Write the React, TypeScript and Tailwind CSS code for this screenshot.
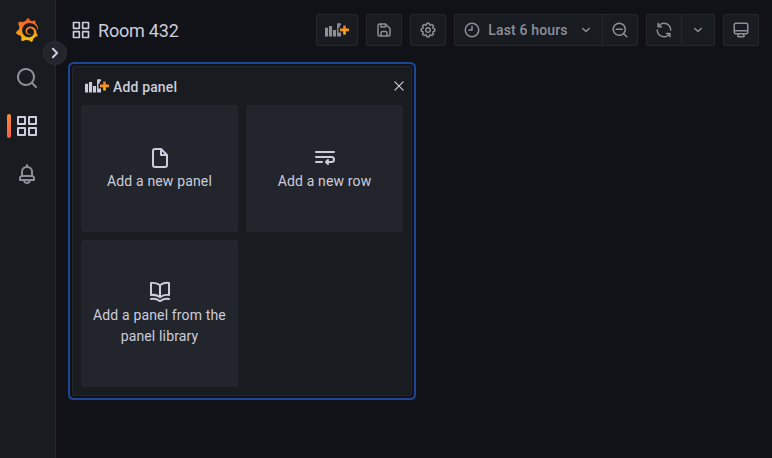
import React from 'react';
import { SiGrafana } from 'react-icons/si';

const paths = {
  apps: 'M10,13H3a1,1,0,0,0-1,1v7a1,1,0,0,0,1,1h7a1,1,0,0,0,1-1V14A1,1,0,0,0,10,13ZM9,20H4V15H9ZM21,2H14a1,1,0,0,0-1,1v7a1,1,0,0,0,1,1h7a1,1,0,0,0,1-1V3A1,1,0,0,0,21,2ZM20,9H15V4h5Zm1,4H14a1,1,0,0,0-1,1v7a1,1,0,0,0,1,1h7a1,1,0,0,0,1-1V14A1,1,0,0,0,21,13Zm-1,7H15V15h5ZM10,2H3A1,1,0,0,0,2,3v7a1,1,0,0,0,1,1h7a1,1,0,0,0,1-1V3A1,1,0,0,0,10,2ZM9,9H4V4H9Z',
  search: 'M21.71,20.29,18,16.61A9,9,0,1,0,16.61,18l3.68,3.68a1,1,0,0,0,1.42,0A1,1,0,0,0,21.71,20.29ZM11,18a7,7,0,1,1,7-7A7,7,0,0,1,11,18Z',
  zoomOut: 'M21.71,20.29,18,16.61A9,9,0,1,0,16.61,18l3.68,3.68a1,1,0,0,0,1.42,0A1,1,0,0,0,21.71,20.29ZM11,18a7,7,0,1,1,7-7A7,7,0,0,1,11,18Zm4-8H7a1,1,0,0,0,0,2h8a1,1,0,0,0,0-2Z',
  bell: 'M18,13.18V10a6,6,0,0,0-5-5.91V3a1,1,0,0,0-2,0V4.09A6,6,0,0,0,6,10v3.18A3,3,0,0,0,4,16v2a1,1,0,0,0,1,1H8.14a4,4,0,0,0,7.72,0H19a1,1,0,0,0,1-1V16A3,3,0,0,0,18,13.18ZM8,10a4,4,0,0,1,8,0v3H8Zm4,10a2,2,0,0,1-1.72-1h3.44A2,2,0,0,1,12,20Zm6-3H6V16a1,1,0,0,1,1-1H17a1,1,0,0,1,1,1Z',
  save: 'M20.71,9.29l-6-6a1,1,0,0,0-.32-.21A1.09,1.09,0,0,0,14,3H6A3,3,0,0,0,3,6V18a3,3,0,0,0,3,3H18a3,3,0,0,0,3-3V10A1,1,0,0,0,20.71,9.29ZM9,5h4V7H9Zm6,14H9V16a1,1,0,0,1,1-1h4a1,1,0,0,1,1,1Zm4-1a1,1,0,0,1-1,1H17V16a3,3,0,0,0-3-3H10a3,3,0,0,0-3,3v3H6a1,1,0,0,1-1-1V6A1,1,0,0,1,6,5H7V8A1,1,0,0,0,8,9h6a1,1,0,0,0,1-1V6.41l4,4Z',
  cog: 'M21.32,9.55l-1.89-.63.89-1.78A1,1,0,0,0,20.13,6L18,3.87a1,1,0,0,0-1.15-.19l-1.78.89-.63-1.89A1,1,0,0,0,13.5,2h-3a1,1,0,0,0-.95.68L8.92,4.57,7.14,3.68A1,1,0,0,0,6,3.87L3.87,6a1,1,0,0,0-.19,1.15l.89,1.78-1.89.63A1,1,0,0,0,2,10.5v3a1,1,0,0,0,.68.95l1.89.63-.89,1.78A1,1,0,0,0,3.87,18L6,20.13a1,1,0,0,0,1.15.19l1.78-.89.63,1.89a1,1,0,0,0,.95.68h3a1,1,0,0,0,.95-.68l.63-1.89,1.78.89A1,1,0,0,0,18,20.13L20.13,18a1,1,0,0,0,.19-1.15l-.89-1.78,1.89-.63A1,1,0,0,0,22,13.5v-3A1,1,0,0,0,21.32,9.55ZM20,12.78l-1.2.4A2,2,0,0,0,17.64,16l.57,1.14-1.1,1.1L16,17.64a2,2,0,0,0-2.79,1.16l-.4,1.2H11.22l-.4-1.2A2,2,0,0,0,8,17.64l-1.14.57-1.1-1.1L6.36,16A2,2,0,0,0,5.2,13.18L4,12.78V11.22l1.2-.4A2,2,0,0,0,6.36,8L5.79,6.89l1.1-1.1L8,6.36A2,2,0,0,0,10.82,5.2l.4-1.2h1.56l.4,1.2A2,2,0,0,0,16,6.36l1.14-.57,1.1,1.1L17.64,8a2,2,0,0,0,1.16,2.79l1.2.4ZM12,8a4,4,0,1,0,4,4A4,4,0,0,0,12,8Zm0,6a2,2,0,1,1,2-2A2,2,0,0,1,12,14Z',
  clock: 'M12,2A10,10,0,1,0,22,12,10,10,0,0,0,12,2Zm0,18a8,8,0,1,1,8-8A8,8,0,0,1,12,20ZM12,6a1,1,0,0,0-1,1v4H8a1,1,0,0,0,0,2h4a1,1,0,0,0,1-1V7A1,1,0,0,0,12,6Z',
  sync: 'M19.91,15.51H15.38a1,1,0,0,0,0,2h2.4A8,8,0,0,1,4,12a1,1,0,1,0-2,0,10,10,0,0,0,16.88,7.23V21a1,1,0,0,0,2,0V16.5A1,1,0,0,0,19.91,15.51ZM12,2A10,10,0,0,0,5.12,4.77V3a1,1,0,0,0-2,0V7.5a1,1,0,0,0,1,1h4.5a1,1,0,0,0,0-2H6.22A8,8,0,0,1,20,12a1,1,0,0,0,2,0A10,10,0,0,0,12,2Z',
  down: 'M17,9.17a1,1,0,0,0-1.41,0L12,12.71,8.46,9.17a1,1,0,0,0-1.41,0,1,1,0,0,0,0,1.42l4.24,4.24a1,1,0,0,0,1.42,0L17,10.59A1,1,0,0,0,17,9.17Z',
  right: 'M14.83,11.29,10.59,7.05a1,1,0,0,0-1.42,0,1,1,0,0,0,0,1.41L12.71,12,9.17,15.54a1,1,0,0,0,0,1.41,1,1,0,0,0,.71.29,1,1,0,0,0,.71-.29l4.24-4.24A1,1,0,0,0,14.83,11.29Z',
  monitor: 'M19,2H5A3,3,0,0,0,2,5V15a3,3,0,0,0,3,3H7.64l-.58,1a2,2,0,0,0,0,2,2,2,0,0,0,1.75,1h6.46A2,2,0,0,0,17,21a2,2,0,0,0,0-2l-.59-1H19a3,3,0,0,0,3-3V5A3,3,0,0,0,19,2ZM8.77,20,10,18H14l1.2,2ZM20,15a1,1,0,0,1-1,1H5a1,1,0,0,1-1-1V14H20Zm0-3H4V5A1,1,0,0,1,5,4H19a1,1,0,0,1,1,1Z',
  times: 'M13.41,12l6.3-6.29a1,1,0,1,0-1.42-1.42L12,10.59,5.71,4.29A1,1,0,0,0,4.29,5.71L10.59,12l-6.3,6.29a1,1,0,0,0,0,1.42,1,1,0,0,0,1.42,0L12,13.41l6.29,6.3a1,1,0,0,0,1.42,0,1,1,0,0,0,0-1.42Z',
  file: 'M20,8.94a1.31,1.31,0,0,0-.06-.27l0-.09a1.07,1.07,0,0,0-.19-.28h0l-6-6h0a1.07,1.07,0,0,0-.28-.19l-.09,0L13.06,2H7A3,3,0,0,0,4,5V19a3,3,0,0,0,3,3H17a3,3,0,0,0,3-3V9S20,9,20,8.94ZM14,5.41,16.59,8H14ZM18,19a1,1,0,0,1-1,1H7a1,1,0,0,1-1-1V5A1,1,0,0,1,7,4h5V9a1,1,0,0,0,1,1h5Z',
  wrap: 'M3,7H21a1,1,0,0,0,0-2H3A1,1,0,0,0,3,7ZM9,15H3a1,1,0,0,0,0,2H9a1,1,0,0,0,0-2Zm9.5-5H3a1,1,0,0,0,0,2H18.5a1.5,1.5,0,0,1,0,3H15.41l.3-.29a1,1,0,0,0-1.42-1.42l-2,2a1,1,0,0,0-.21.33,1,1,0,0,0,0,.76,1,1,0,0,0,.21.33l2,2a1,1,0,0,0,1.42,0,1,1,0,0,0,0-1.42l-.3-.29H18.5a3.5,3.5,0,0,0,0-7Z',
  book: 'M21.17,2.06A13.1,13.1,0,0,0,19,1.87a12.94,12.94,0,0,0-7,2.05,12.94,12.94,0,0,0-7-2,13.1,13.1,0,0,0-2.17.19,1,1,0,0,0-.83,1v12a1,1,0,0,0,1.17,1,10.9,10.9,0,0,1,8.25,1.91l.12.07.11,0a.91.91,0,0,0,.7,0l.11,0,.12-.07A10.9,10.9,0,0,1,20.83,16,1,1,0,0,0,22,15V3A1,1,0,0,0,21.17,2.06ZM11,15.35a12.87,12.87,0,0,0-6-1.48c-.33,0-.66,0-1,0v-10a8.69,8.69,0,0,1,1,0,10.86,10.86,0,0,1,6,1.8Zm9-1.44c-.34,0-.67,0-1,0a12.87,12.87,0,0,0-6,1.48V5.67a10.86,10.86,0,0,1,6-1.8,8.69,8.69,0,0,1,1,0Zm1.17,4.15A13.1,13.1,0,0,0,19,17.87a12.94,12.94,0,0,0-7,2.05,12.94,12.94,0,0,0-7-2.05,13.1,13.1,0,0,0-2.17.19A1,1,0,0,0,2,19.21a1,1,0,0,0,1.17.79,10.9,10.9,0,0,1,8.25,1.91,1,1,0,0,0,1.16,0A10.9,10.9,0,0,1,20.83,20,1,1,0,0,0,22,19.21,1,1,0,0,0,21.17,18.06Z',
};

function Icon({ name, size = 18 }: { name: keyof typeof paths; size?: number }) {
  return (
    <svg width={size} height={size} viewBox="0 0 24 24" fill="currentColor" className="shrink-0">
      <path d={paths[name]} />
    </svg>
  );
}

function AddPanelIcon() {
  return (
    <svg width="24" height="14" viewBox="0 0 24 14" className="shrink-0">
      <defs>
        <linearGradient id="plus" x1="0" y1="0" x2="0" y2="1">
          <stop offset="0" stopColor="#f2682c" />
          <stop offset="1" stopColor="#fcc419" />
        </linearGradient>
      </defs>
      <path
        fill="currentColor"
        d="M0 4.8h3.1v8.8H0zM4 3.1h3.1v10.5H4zM8 6.9h3.1v6.7H8zM12.1.8q0-.6.6-.6h2.7q.6 0 .6.6v1.4h-1.2v2.4h-1.3v4.8H16v4.2h-3.9z"
      />
      <path fill="url(#plus)" d="M18.2 2.4h2.6v3.2H24v2.6h-3.2v3.3h-2.6V8.2H15V5.6h3.2z" />
    </svg>
  );
}

const button = 'flex h-8 items-center justify-center border border-[#25272c] bg-[#181b1f]';

function Tile({ icon, label }: { icon: keyof typeof paths; label: string }) {
  return (
    <div className="flex flex-col items-center justify-center gap-px rounded-[2px] bg-[#22252b] px-2 text-center">
      <Icon name={icon} size={24} />
      <span>{label}</span>
    </div>
  );
}

export default function App() {
  return (
    <div className="flex h-[458px] w-full overflow-hidden bg-[#111217] font-[Roboto,sans-serif] text-sm leading-[21px] tracking-[0.15px] text-[#ccccdc]">
      <nav className="relative flex w-14 shrink-0 flex-col items-center border-r border-[#25272c] bg-[#181b1f] pr-px pt-[18px] text-[#8d8e99]">
        <svg width="0" height="0" className="absolute">
          <defs>
            <linearGradient id="logo" x1="0" y1="0" x2="0" y2="1">
              <stop offset="0" stopColor="#f05a28" />
              <stop offset="0.45" stopColor="#f58220" />
              <stop offset="1" stopColor="#fbca0a" />
            </linearGradient>
          </defs>
        </svg>
        <SiGrafana size={24} fill="url(#logo)" />
        <div className="mt-6 flex flex-col gap-6">
          <Icon name="search" size={24} />
          <div className="relative text-[#ccccdc]">
            <div className="absolute -left-2 top-0 h-6 w-1 rounded-[2px] bg-linear-to-b from-[#ff8833] to-[#f55f3e]" />
            <Icon name="apps" size={24} />
          </div>
          <Icon name="bell" size={24} />
        </div>
        <button className="absolute left-[43px] top-[41px] z-10 flex size-6 items-center justify-center rounded-full border border-[#2d2f36] bg-[#22252b] text-[#ccccdc]">
          <Icon name="right" size={24} />
        </button>
      </nav>

      <main className="min-w-0 flex-1">
        <header className="flex h-[60px] items-center pl-[15px] pr-[13px]">
          <Icon name="apps" size={20} />
          <h1 className="ml-[7px] flex-1 pt-px text-lg tracking-[-0.2px]">Room 432</h1>
          <div className="flex gap-2 text-[#8d8e99]">
            <button className={`${button} w-[42px] rounded-[2px]`}><AddPanelIcon /></button>
            <button className={`${button} w-9 rounded-[2px]`}><Icon name="save" /></button>
            <button className={`${button} w-9 rounded-[2px]`}><Icon name="cog" /></button>
            <div className="flex">
              <button className={`${button} w-[149px] rounded-l-[2px] border-r-0 font-medium`}>
                <Icon name="clock" />
                <span className="ml-[7px] mr-[9px]">Last 6 hours</span>
                <Icon name="down" />
              </button>
              <button className={`${button} -ml-px w-9 rounded-r-[2px]`}><Icon name="zoomOut" /></button>
            </div>
            <div className="flex">
              <button className={`${button} w-9 rounded-l-[2px]`}><Icon name="sync" /></button>
              <button className={`${button} -ml-px w-[34px] rounded-r-[2px]`}><Icon name="down" /></button>
            </div>
            <button className={`${button} w-9 rounded-[2px]`}><Icon name="monitor" /></button>
          </div>
        </header>

        <section className="ml-4 mt-1.5 h-[330px] w-[340px] rounded-[2px] border border-[#25272c] bg-[#181b1f] px-2 shadow-[0_0_0_2px_#111217,0_0_0_4px_#1f4694]">
          <div className="flex h-[38px] items-center pl-1">
            <AddPanelIcon />
            <span className="ml-1 flex-1 pt-0.5 font-medium">Add panel</span>
            <button className="-mr-[3px]"><Icon name="times" size={14} /></button>
          </div>
          <div className="grid grid-cols-[157px_157px] grid-rows-[127px_147px] gap-2">
            <Tile icon="file" label="Add a new panel" />
            <Tile icon="wrap" label="Add a new row" />
            <Tile icon="book" label="Add a panel from the panel library" />
          </div>
        </section>
      </main>
    </div>
  );
}
